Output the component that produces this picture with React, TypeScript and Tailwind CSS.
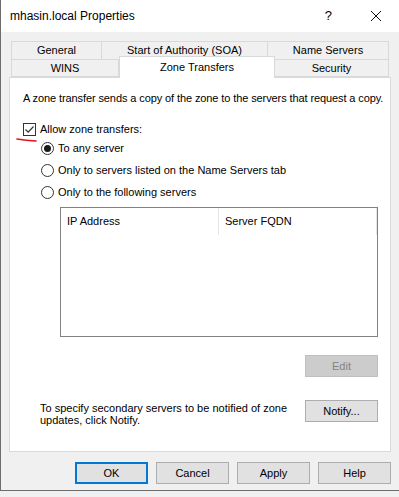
import React from 'react';

const font = { fontFamily: '"Liberation Sans", Arial, sans-serif' };

const Radio = ({ checked, label }: { checked?: boolean; label: string }) => (
  <div className="flex items-center h-[22px]">
    <span className="w-[13px] h-[13px] rounded-full border border-[#333333] bg-white flex items-center justify-center">
      {checked && <span className="w-[7px] h-[7px] rounded-full bg-[#1a1a1a]" />}
    </span>
    <span className="ml-[4px]">{label}</span>
  </div>
);

const Button = ({ label, primary, disabled, className }: { label: string; primary?: boolean; disabled?: boolean; className?: string }) => (
  <div
    className={
      'w-[73px] h-[22px] flex items-center justify-center shrink-0 ' +
      (primary
        ? 'border-2 border-[#0078d7] bg-[#e1e1e1] text-black '
        : disabled
        ? 'border border-[#bfbfbf] bg-[#cccccc] text-[#838383] '
        : 'border border-[#adadad] bg-[#e1e1e1] text-black ') +
      (className || '')
    }
  >
    {label}
  </div>
);

export default function App() {
  return (
    <div className="w-[399px] h-[497px] bg-[#f0f0f0] text-[11px] text-black overflow-hidden" style={font}>
      <div className="h-[491px] border-l border-b border-[#6d6d6d] bg-[#f0f0f0] flex flex-col">
        {/* Title bar */}
        <div className="h-[32px] bg-white flex items-center pl-[9px] shrink-0">
          <span className="text-[12px]">mhasin.local Properties</span>
          <span className="ml-auto mr-[38px] text-[13px]">?</span>
          <svg width="12" height="12" viewBox="0 0 12 12" className="mr-[17px]">
            <path d="M1 1 L11 11 M11 1 L1 11" stroke="#111" strokeWidth="1" />
          </svg>
        </div>

        <div className="px-[8px] pt-[9px]">
          {/* Tabs */}
          <div className="ml-[2px] flex h-[18px]">
            <div className="w-[91px] border border-b-0 border-[#d9d9d9] flex items-center justify-center">General</div>
            <div className="w-[166px] border border-l-0 border-b-0 border-[#d9d9d9] flex items-center justify-center">Start of Authority (SOA)</div>
            <div className="w-[121px] border border-l-0 border-b-0 border-[#d9d9d9] flex items-center justify-center">Name Servers</div>
          </div>
          <div className="ml-[2px] flex h-[18px] items-end">
            <div className="w-[108px] h-[18px] border border-[#d9d9d9] flex items-center justify-center">WINS</div>
            <div className="relative z-10 w-[156px] h-[22px] -mb-px bg-white border border-b-0 border-[#d9d9d9] flex items-start justify-center pt-[2px]">Zone Transfers</div>
            <div className="w-[114px] h-[18px] border border-l-0 border-[#d9d9d9] flex items-center justify-center">Security</div>
          </div>

          {/* Panel */}
          <div className="h-[375px] bg-white border border-[#d9d9d9] pl-[13px] pr-[12px] pt-[12px] flex flex-col">
            <p className="leading-[16px] whitespace-nowrap tracking-[-0.1px]">A zone transfer sends a copy of the zone to the servers that request a copy.</p>

            <div className="relative mt-[15px] flex items-center h-[16px]">
              <span className="w-[13px] h-[13px] border border-[#333333] bg-white flex items-center justify-center">
                <svg width="11" height="11" viewBox="0 0 11 11">
                  <path d="M1.5 5.5 L4.2 8.2 L9.5 2.5" fill="none" stroke="#333" strokeWidth="1.2" />
                </svg>
              </span>
              <span className="ml-[4px]">Allow zone transfers:</span>
              <svg width="22" height="6" viewBox="0 0 22 6" className="absolute left-[-7px] top-[16px]">
                <path d="M1 2 Q10 3.5 20 4" fill="none" stroke="#e0141e" strokeWidth="1.6" strokeLinecap="round" />
              </svg>
            </div>

            <div className="ml-[18px] flex flex-col">
              <Radio checked label="To any server" />
              <Radio label="Only to servers listed on the Name Servers tab" />
              <Radio label="Only to the following servers" />
            </div>

            {/* Server list */}
            <div className="ml-[37px] mt-[4px] w-[318px] h-[130px] border border-[#828282] bg-white shrink-0">
              <div className="flex h-[27px]">
                <div className="w-[158px] border-r border-[#e5e5e5] pl-[6px] flex items-center">IP Address</div>
                <div className="w-[158px] border-r border-[#e5e5e5] pl-[6px] flex items-center">Server FQDN</div>
              </div>
            </div>

            <div className="flex justify-end mt-[18px]">
              <Button label="Edit" disabled />
            </div>

            <div className="flex mt-[23px] ml-[17px] items-start">
              <div className="leading-[12px] whitespace-nowrap pt-[2px]">
                <div>To specify secondary servers to be notified of zone</div>
                <div>updates, click Notify.</div>
              </div>
              <Button label="Notify..." className="ml-auto" />
            </div>
          </div>

          {/* Bottom buttons */}
          <div className="flex justify-end gap-[8px] mt-[10px]">
            <Button label="OK" primary />
            <Button label="Cancel" />
            <Button label="Apply" />
            <Button label="Help" />
          </div>
        </div>
      </div>
    </div>
  );
}
